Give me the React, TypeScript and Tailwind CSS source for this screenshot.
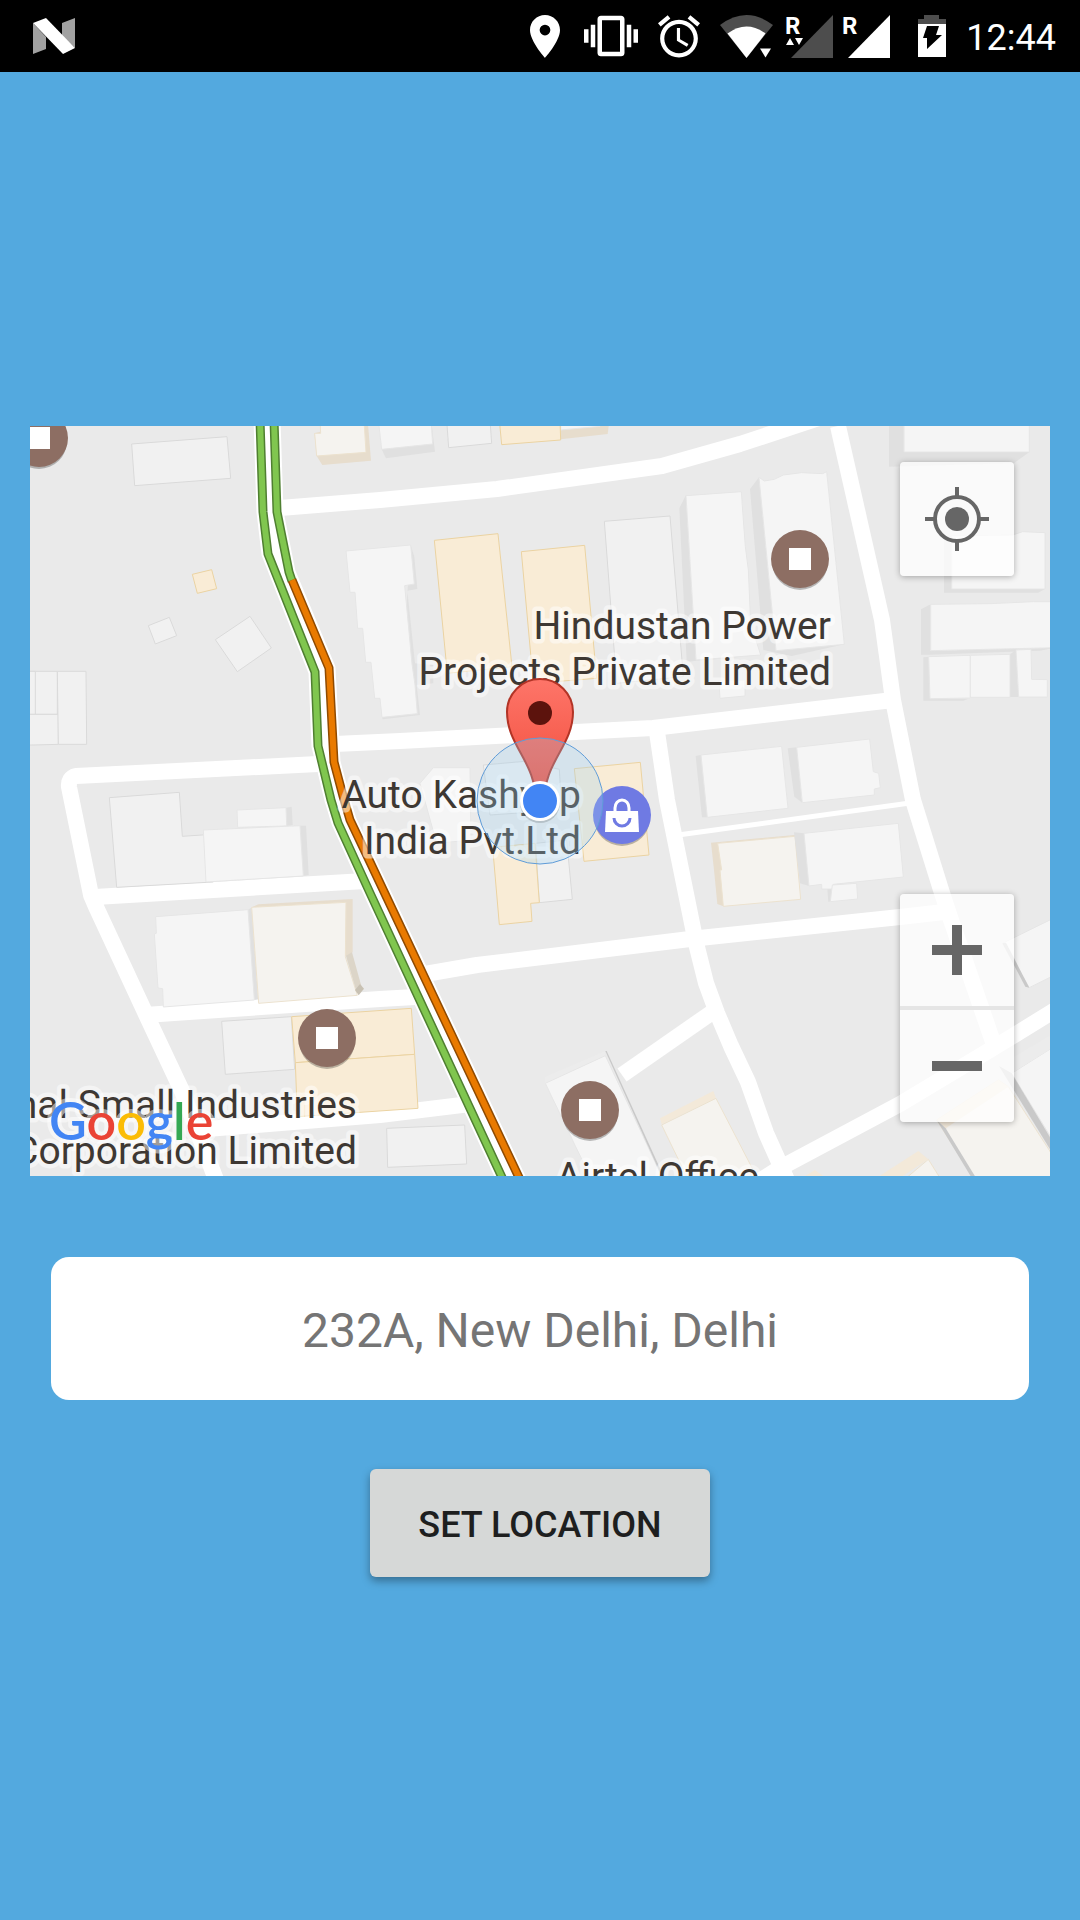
import React from "react";

type Kind = "flat" | "shop" | "roof" | "side" | "sand" | "sandSide" | "dark" | "sandTop" | "lip";

const KIND_CLASS: Record<Kind, string> = {
  flat: "fill-[#f1f1f1] stroke-[#dadada]",
  shop: "fill-[#f9ecd6] stroke-[#ebd3a2]",
  roof: "fill-[#f5f5f5] stroke-[#e6e6e6]",
  side: "fill-[#e0e0e0] stroke-none",
  sand: "fill-[#f5f3ef] stroke-[#ece2cf]",
  sandSide: "fill-[#e7ddcd] stroke-none",
  dark: "fill-[#c9c9c9] stroke-none",
  sandTop: "fill-[#f3e9d9] stroke-none",
  lip: "fill-[#ececec] stroke-none",
};

/* Each block of buildings is drawn at three units to a map unit from its own origin. */
const BLOCKS: { origin: string; shapes: [Kind, string][] }[] = [
  {
    origin: "translate(20 420) scale(0.33333)",
    shapes: [
      ["flat", "335,72 621,50 632,175 344,197"],
      ["shop", "517,463 575,449 590,506 532,520"],
      ["flat", "385,617 448,592 470,647 406,672"],
      ["flat", "586,659 690,589 754,684 652,755"],
      ["flat", "0,754 112,754 112,883 0,883"],
      ["flat", "0,754 46,754 46,883 0,883"],
      ["flat", "0,883 115,883 115,973 0,976"],
      ["flat", "112,754 198,754 200,973 115,973"],
      ["sandSide", "883,40 1043,0 1053,122 907,135 890,108"],
      ["sand", "900,0 1032,0 1038,97 890,108 884,40 902,40"],
    ],
  },
  {
    origin: "translate(370 420) scale(0.33333)",
    shapes: [
      ["side", "183,0 195,95 48,115 35,88"],
      ["roof", "25,0 183,0 188,72 35,88"],
      ["flat", "230,0 360,0 365,70 236,83"],
      ["sandSide", "572,30 717,10 713,42 572,58"],
      ["roof", "572,0 690,0 690,19 572,30"],
      ["shop", "388,0 570,0 572,60 395,74"],
      ["side", "122,375 133,410 142,507 112,512 135,730 190,735 190,790 140,795 150,885 38,898 36,892 100,700"],
      ["roof", "-72,393 122,375 133,492 104,497 126,732 135,795 142,881 36,892 30,835 14,835 3,727 -13,727 -22,625 -37,625 -45,517 -60,517"],
      ["shop", "193,361 384,341 426,740 232,760"],
      ["shop", "454,395 644,376 680,775 490,790"],
      ["flat", "703,304 900,288 940,770 740,790"],
      ["side", "948,225 928,265 950,725 1176,705 978,720"],
    ],
  },
  {
    origin: "translate(700 420) scale(0.33333)",
    shapes: [
      ["roof", "-42,227 124,215 130,300 136,380 145,450 152,610 182,705 -12,720"],
      ["side", "177,172 150,207 190,690 275,708 433,673 228,692"],
      ["roof", "177,172 193,183 223,178 250,165 305,158 368,161 380,155 433,673 228,692"],
      ["side", "567,0 612,0 612,96 988,96 942,130 567,140"],
      ["roof", "612,0 988,0 988,96 612,96"],
      ["side", "732,350 755,347 755,507 1035,507 1015,518 732,518"],
      ["roof", "755,347 938,345 968,335 1035,338 1035,507 755,507"],
      ["side", "663,568 692,553 692,692 1070,682 1020,692 690,704 663,704"],
      ["roof", "692,553 870,551 1000,545 1070,545 1070,683 692,692"],
      ["side", "670,712 686,710 690,836 805,836 790,842 670,842"],
      ["side", "930,703 948,690 956,831 930,831"],
      ["roof", "686,710 811,706 811,834 690,836"],
      ["roof", "811,706 930,703 930,832 811,832"],
      ["roof", "948,690 993,688 995,778 1042,779 1042,831 956,831"],
      ["roof", "57,780 135,780 135,828 60,835"],
      ["side", "-13,1008 3,1005 22,1192 6,1192"],
      ["roof", "3,1005 245,979 264,1165 22,1192"],
      ["side", "263,985 290,982 307,1148 283,1130"],
      ["roof", "290,982 509,957 520,1055 536,1060 541,1103 523,1107 523,1125 307,1148"],
    ],
  },
  {
    origin: "translate(20 790) scale(0.33333)",
    shapes: [
      ["flat", "268,23 478,7 487,139 575,133 580,276 290,292"],
      ["side", "798,53 815,50 818,105 800,108"],
      ["roof", "651,60 798,53 800,108 653,112"],
      ["side", "840,107 858,107 866,255 850,258"],
      ["roof", "550,120 840,107 850,258 558,276"],
      ["side", "684,359 696,352 714,628 703,630"],
      ["roof", "407,380 684,359 703,630 430,651 428,596 414,594 403,432 409,430"],
      ["flat", "605,694 814,680 824,838 616,853"],
      ["shop", "815,680 1174,655 1184,793 826,818"],
      ["shop", "826,818 1184,793 1194,955 832,980"],
    ],
  },
  {
    origin: "translate(370 790) scale(0.33333)",
    shapes: [
      ["flat", "50,1015 284,1005 290,1122 53,1132"],
      ["flat", "497,160 590,150 607,328 508,338"],
      ["shop", "368,172 495,160 508,338 482,340 486,394 388,404"],
      ["shop", "613,-64 811,-83 837,195 642,214"],
      ["roof", "150,-20 190,-67 300,-67 303,150 200,160"],
      ["flat", "340,-75 464,-86 568,-62 575,60 360,75"],
      ["lip", "526,860 706,783 706,797 526,880"],
      ["roof", "526,880 706,797 820,1040 880,1170 665,1170"],
      ["dark", "706,783 710,783 886,1170 880,1170"],
      ["sandTop", "870,985 1030,903 1038,925 875,1003"],
      ["sand", "875,1005 1038,925 1165,1170 955,1170"],
    ],
  },
  {
    origin: "translate(700 790) scale(0.33333)",
    shapes: [
      ["sandSide", "33,158 285,135 285,141 60,165 66,240 70,349 52,342 42,240"],
      ["sand", "53,160 285,139 302,328 70,349 60,240 65,240"],
      ["side", "282,127 312,130 327,288 300,280"],
      ["side", "382,295 397,285 391,335 385,335"],
      ["roof", "312,130 595,100 610,261 400,283 397,297 365,297 365,283 327,288"],
      ["roof", "397,285 470,280 473,327 391,335"],
      ["roof", "907,460 1070,380 1070,552 988,593"],
      ["dark", "907,460 918,458 988,593 976,590"],
      ["sand", "710,990 895,870 925,890 1070,1115 1070,1180 830,1180"],
      ["sandTop", "710,990 895,870 925,890 737,1015"],
      ["dark", "710,990 737,1015 838,1180 825,1180"],
      ["roof", "935,850 1070,765 1070,1070"],
      ["lip", "897,828 1070,725 1070,765 935,850"],
      ["dark", "897,828 935,850 1070,1075 1070,1110"],
      ["sand", "600,1180 685,1108 730,1180"],
      ["sandTop", "520,1170 655,1083 685,1108 590,1170"],
      ["sandTop", "315,1158 345,1140 370,1158"],
    ],
  },
];

const ROADS = [
  "M280 508 L380 500 L497 489 L662 466 L740 444 L840 411",
  "M838 426 L882 620 L893 700 L913 800 L942 893 L950 917 L993 1042",
  "M335 744 L400 741 L653 728 L893 700",
  "M318 764 L76 776 Q68 778 69 787 L91 895 L97 909 L143 1008 L182 1091 L220 1190",
  "M95 897 L365 881",
  "M145 1015 L380 999 L415 997",
  "M425 974 L477 965 L690 939 L900 917 L944 912",
  "M195 1130 L380 1115 L470 1104",
  "M657 732 L667 800 L696 943 L706 983 L717 1013 L731 1046 L748 1082 L766 1133 L787 1180",
  "M622 1075 L714 1011",
  "M750 1187 L780 1168 L900 1104 L990 1050 L1065 1004",
];

const LEFT_LANE = "M260 420 L263 512 L268 554 L315 672 L318 746 L331 800 L338 823 L370 893 L506 1186";
const RIGHT_LANE = "M274 420 L277 512 L289 572 L329 668 L334 762 L343 796 L350 820 L370 862 L523 1186";
const RIGHT_GREEN = "M274 420 L277 512 L289 572 L292 581";
const RIGHT_ORANGE = "M292 580 L329 668 L334 762 L343 796 L350 820 L370 862 L523 1186";
const MEDIAN = "M267 420 L270 512 L279 563 L322 670 L326 754 L337 798 L344 822 L514 1186";

function Lane({ d, edge, fill }: { d: string; edge: string; fill: string }) {
  return (
    <g fill="none">
      <path d={d} strokeWidth="9" className={edge} />
      <path d={d} strokeWidth="6" className={fill} />
    </g>
  );
}

function Poi({ x, y }: { x: number; y: number }) {
  return (
    <g>
      <circle cx={x} cy={y + 3} r="28" fillOpacity="0.25" />
      <circle cx={x} cy={y} r="29" className="fill-[#8d6e63]" />
      <rect x={x - 11} y={y - 11} width="22" height="22" className="fill-white" />
    </g>
  );
}

function Label({ x, y, lines, anchor }: { x: number; y: number; lines: string[]; anchor: "start" | "end" }) {
  return (
    <text
      textAnchor={anchor}
      strokeWidth="9"
      strokeOpacity="0.5"
      strokeLinejoin="round"
      paintOrder="stroke"
      className="fill-[#3e3833] stroke-white text-[39px]"
    >
      {lines.map((line, i) => (
        <tspan key={line} x={x} y={y + i * 46}>
          {line}
        </tspan>
      ))}
    </text>
  );
}

function MapCanvas() {
  return (
    <svg
      viewBox="30 426 1020 750"
      preserveAspectRatio="xMidYMid slice"
      className="block h-full w-full"
      role="img"
      aria-label="Map of New Delhi"
    >
      <defs>
        <linearGradient id="pin" x1="0" y1="0" x2="0" y2="1">
          <stop offset="0" stopColor="#fe7569" />
          <stop offset="1" stopColor="#f04a38" />
        </linearGradient>
      </defs>
      <rect x="30" y="426" width="1020" height="750" className="fill-[#eaeaea]" />

      <g fill="none" className="stroke-white" strokeWidth="16" strokeLinejoin="round">
        {ROADS.map((d) => (
          <path key={d} d={d} />
        ))}
        <path d="M678 835 L700 832 L910 803" strokeWidth="5" />
      </g>

      {BLOCKS.map((block) => (
        <g key={block.origin} transform={block.origin} strokeWidth="3">
          {block.shapes.map(([kind, points]) => (
            <polygon key={kind + points} points={points} className={KIND_CLASS[kind]} />
          ))}
        </g>
      ))}
      <g transform="translate(20 790) scale(0.33333)" strokeWidth="3">
        <polygon points="695,352 715,343 998,327 998,487 976,500 970,345" className={KIND_CLASS.sandSide} />
        <polygon points="695,352 978,337 976,500 1012,616 716,640" className={KIND_CLASS.sand} />
        <polygon points="978,497 996,487 1024,588 1008,600" className="fill-[#dcd5c8]" />
        <polygon points="1005,600 1020,582 1032,596 1016,616" className="fill-[#c8c1b3]" />
      </g>

      <g fill="none" className="stroke-white">
        <path d={LEFT_LANE} strokeWidth="13" />
        <path d={RIGHT_LANE} strokeWidth="13" />
        <path d={MEDIAN} strokeWidth="10" />
      </g>
      <Lane d={LEFT_LANE} edge="stroke-[#4f7f31]" fill="stroke-[#80c64f]" />
      <Lane d={RIGHT_GREEN} edge="stroke-[#4f7f31]" fill="stroke-[#80c64f]" />
      <Lane d={RIGHT_ORANGE} edge="stroke-[#8f4a00]" fill="stroke-[#e97a00]" />

      <Poi x={39} y={438} />
      <Poi x={800} y={559} />
      <Poi x={327} y={1038} />
      <Poi x={590} y={1110} />

      <Label x={831} y={639} anchor="end" lines={["Hindustan Power", "Projects Private Limited"]} />
      <Label x={581} y={808} anchor="end" lines={["Auto Kashyap", "India Pvt.Ltd"]} />
      <Label x={357} y={1118} anchor="end" lines={["National Small Industries", "Corporation Limited"]} />
      <Label x={556} y={1190} anchor="start" lines={["Airtel Office"]} />

      <g>
        <circle cx="622" cy="818" r="28" fillOpacity="0.25" />
        <circle cx="622" cy="815" r="29" className="fill-[#6f7ae3]" />
        <path d="M606 811 h32 l1 21 h-34 z" className="fill-white" />
        <path d="M615 812 v-4 a7 8 0 0 1 14 0 v4" fill="none" strokeWidth="3" className="stroke-white" />
        <path d="M614 818 a8 8 0 0 0 16 0" fill="none" strokeWidth="3" className="stroke-[#6f7ae3]" />
      </g>

      <path
        d="M535 801 C537 763 507 746 507 712 A33 33 0 0 1 573 712 C573 746 543 763 545 801 Z"
        fill="url(#pin)"
        strokeWidth="2"
        className="stroke-[#b23426]"
      />
      <circle cx="540" cy="713" r="12" className="fill-[#5c130d]" />
      <circle cx="540" cy="801" r="63" strokeWidth="1" fillOpacity="0.28" className="fill-[#9fd0f0] stroke-[#5f9cd8]" />
      <circle cx="540" cy="803" r="20" fillOpacity="0.15" />
      <circle cx="540" cy="801" r="20" className="fill-white" />
      <circle cx="540" cy="801" r="17" className="fill-[#4285f4]" />

      <text x="49" y="1140" strokeWidth="8" strokeOpacity="0.5" strokeLinejoin="round" paintOrder="stroke" className="stroke-white font-[Lato] text-[52px] font-semibold">
        <tspan className="fill-[#4285f4]">G</tspan>
        <tspan className="fill-[#ea4335]">o</tspan>
        <tspan className="fill-[#fbbc05]">o</tspan>
        <tspan className="fill-[#4285f4]">g</tspan>
        <tspan className="fill-[#34a853]">l</tspan>
        <tspan className="fill-[#ea4335]">e</tspan>
      </text>
    </svg>
  );
}

function StatusBar() {
  return (
    <header className="flex h-[72px] items-center bg-black pr-6 pl-8 text-white">
      <svg width="44" height="36" viewBox="0 0 44 36" aria-hidden="true">
        <path d="M1 5 L14 19 V31 L1 36 Z M30 5 L43 0 V30 L30 18 Z" className="fill-[#a1a1a1]" />
        <path d="M1 5 L14 0 L43 30 L31 36 Z" className="fill-white" />
      </svg>
      <div className="ml-auto flex items-center fill-white">
        <svg width="30" height="43" viewBox="5 2 14 20">
          <path d="M12 2C8.13 2 5 5.13 5 9c0 5.25 7 13 7 13s7-7.75 7-13c0-3.87-3.13-7-7-7zm0 9.5a2.5 2.5 0 1 1 0-5 2.5 2.5 0 0 1 0 5z" />
        </svg>
        <svg width="54" height="42" viewBox="0 3 24 18" className="ml-6">
          <path d="M0 15h2V9H0v6zm3 2h2V7H3v10zm19-8v6h2V9h-2zm-3 8h2V7h-2v10zM16.5 3h-9C6.67 3 6 3.67 6 4.5v15c0 .83.67 1.5 1.5 1.5h9c.83 0 1.5-.67 1.5-1.5v-15c0-.83-.67-1.5-1.5-1.5zM16 19H8V5h8v14z" />
        </svg>
        <svg width="42" height="43" viewBox="2 1.8 20 20.4" className="ml-5">
          <path d="M22 5.72l-4.6-3.86-1.29 1.53 4.6 3.86L22 5.72zM7.88 3.39L6.6 1.86 2 5.71l1.29 1.53 4.59-3.85zM12.5 8H11v6l4.75 2.85.75-1.23-4-2.37V8zM12 4c-4.97 0-9 4.03-9 9s4.02 9 9 9c4.97 0 9-4.03 9-9s-4.03-9-9-9zm0 16c-3.87 0-7-3.13-7-7s3.13-7 7-7 7 3.13 7 7-3.13 7-7 7z" />
        </svg>
        <svg width="54" height="43" viewBox="0 0 54 43" className="ml-5">
          <path d="M0 10 Q26.500 -10 53 10 L26.500 43 Z" className="fill-[#4d4d4d]" />
          <path d="M7.500 18.500 Q26.500 4.500 45.500 18.500 L26.500 43 Z" />
          <path d="M40 33.500 H51 L45.500 42.500 Z" />
        </svg>
        <svg width="47" height="43" viewBox="0 0 47 43" className="ml-3 overflow-visible">
          <path d="M5 43 L47 0 V43 Z" className="fill-[#4d4d4d]" />
          <path d="M0 30 L4 23 L8 30 Z M9 23 H17 L13 30 Z" />
          <text x="-1" y="19" className="text-[24px] font-bold">R</text>
        </svg>
        <svg width="47" height="43" viewBox="0 0 47 43" className="ml-2.5 overflow-visible">
          <path d="M5 43 L47 0 V43 Z" />
          <text x="-1" y="19" className="text-[24px] font-bold">R</text>
        </svg>
        <svg width="28" height="42" viewBox="0 0 28 42" className="ml-7">
          <path d="M6 0 H21 V4 H28 V9 H0 V4 H6 Z" className="fill-[#4d4d4d]" />
          <path d="M0 9 H28 V42 H0 Z" />
          <path d="M9 11 H21 L18 20 H24 L9 34 V23 H5 Z" className="fill-black" />
        </svg>
        <time className="ml-5 pt-1 text-[36px] leading-10">12:44</time>
      </div>
    </header>
  );
}

const CONTROL = "flex w-[114px] items-center justify-center text-[#666]";
const PANEL = "absolute right-9 rounded bg-white/75 shadow-[0_1px_6px_rgba(0,0,0,0.3)]";

export default function App() {
  return (
    <div className="flex min-h-screen flex-col bg-[#53a9df] font-[Roboto,sans-serif]">
      <StatusBar />
      <main className="flex flex-1 flex-col items-center justify-center px-[30px] pt-[11px]">
        <section className="relative aspect-[1020/750] w-full overflow-hidden">
          <MapCanvas />
          <div className={PANEL + " top-9"}>
            <button type="button" aria-label="My location" className={CONTROL + " h-[114px]"}>
              <svg width="64" height="64" viewBox="0 0 64 64" fill="none" stroke="currentColor" strokeWidth="4">
                <circle cx="32" cy="32" r="22" />
                <circle cx="32" cy="32" r="12" fill="currentColor" stroke="none" />
                <path d="M32 0 V9 M32 55 V64 M0 32 H9 M55 32 H64" />
              </svg>
            </button>
          </div>
          <div className={PANEL + " bottom-[54px] divide-y-4 divide-[#e5e5e5]"}>
            <button type="button" aria-label="Zoom in" className={CONTROL + " h-[116px]"}>
              <svg width="50" height="50" viewBox="0 0 50 50" stroke="currentColor" strokeWidth="10">
                <path d="M25 0 V50 M0 25 H50" />
              </svg>
            </button>
            <button type="button" aria-label="Zoom out" className={CONTROL + " h-[112px]"}>
              <svg width="50" height="50" viewBox="0 0 50 50" stroke="currentColor" strokeWidth="10">
                <path d="M0 25 H50" />
              </svg>
            </button>
          </div>
        </section>
        <div className="mt-[81px] w-full px-[21px]">
          <input
            type="text"
            aria-label="Address"
            defaultValue="232A, New Delhi, Delhi"
            className="h-[143px] w-full rounded-[18px] bg-white px-6 pt-1 text-center text-[48px] text-[#757575] outline-none"
          />
        </div>
        <button
          type="button"
          className="mt-[69px] h-[108px] rounded-md bg-[#d6d8d7] px-12 pt-1 text-[36px] font-medium text-[#1e1f1f] shadow-[0_4px_8px_rgba(0,0,0,0.35)]"
        >
          SET LOCATION
        </button>
      </main>
    </div>
  );
}
